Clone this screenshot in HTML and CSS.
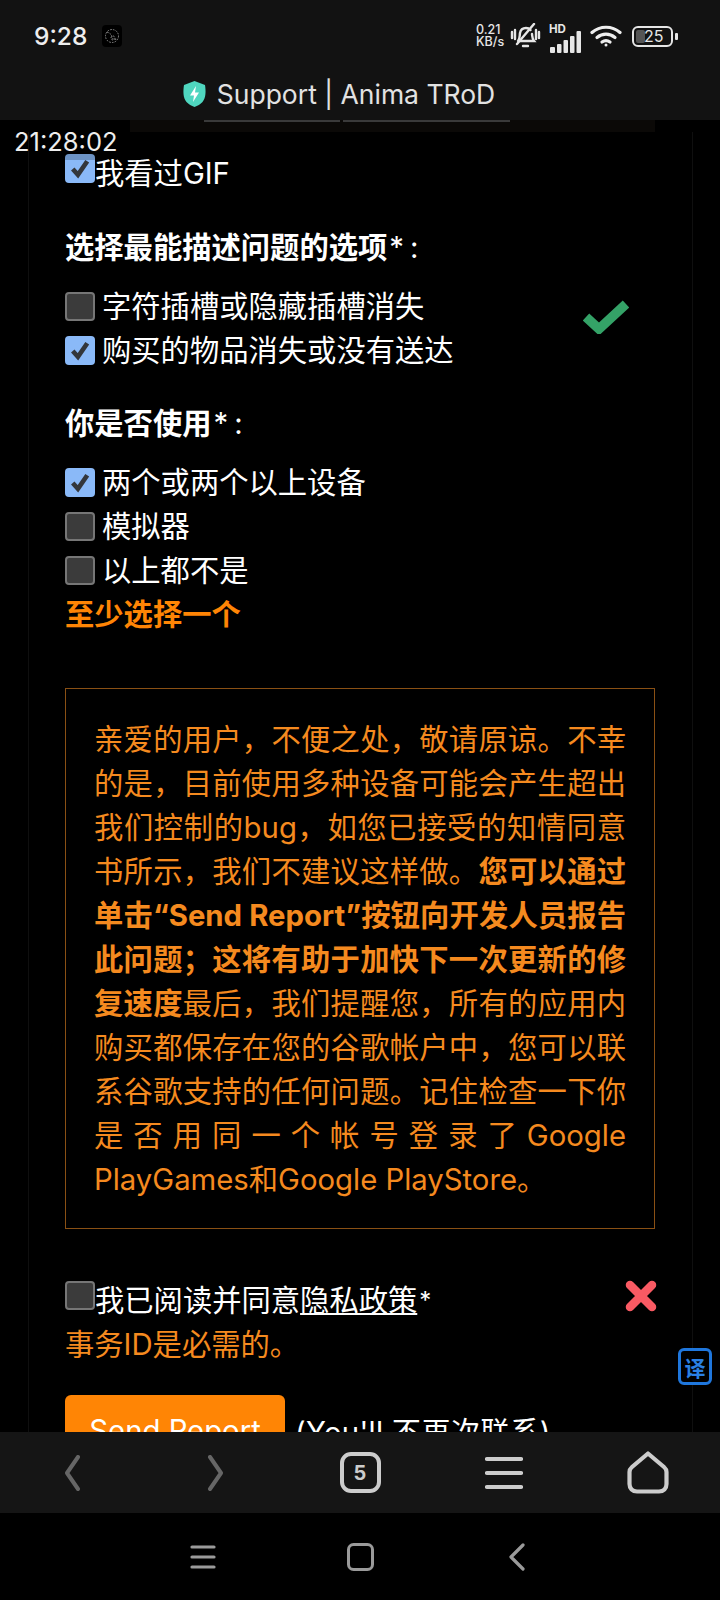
FILE: index.html
```html
<!DOCTYPE html>
<html lang="zh-CN">
<head>
  <meta charset="UTF-8">
  <meta name="viewport" content="width=device-width, initial-scale=1.0">
  <title>Support | Anima TRoD</title>
  <link rel="stylesheet" href="styles.css">
</head>
<body>
  <header class="top-bar">
    <div class="status-bar">
      <span class="status-time">9:28</span>
      <span class="status-app">
        <svg width="18" height="20" viewBox="0 0 18 20" fill="none" stroke="#8a8a8a" stroke-width="1" stroke-dasharray="1.6 1.2">
          <circle cx="9" cy="10" r="6.5"/>
          <path d="M4 6c3 1 5 3 5 5s3 3 5 2"/>
          <circle cx="10" cy="12" r="2"/>
        </svg>
      </span>
      <div class="status-icons">
        <span class="net-speed">0.21<br>KB/s</span>
        <svg class="icon-bell" width="31" height="26" viewBox="0 0 31 26" fill="none" stroke="#e6e6e6" stroke-width="2.4" stroke-linecap="round">
          <path d="M8 18c2-2 1.500-5 2-8 .5-3 3-5 6-5 2 0 3.500.8 4.500 2M22 11c.4 3 .3 5 2 7H10"/>
          <path d="M13 23h5"/>
          <path d="M24 1 7 21"/>
          <path d="M2 9v6M5 7v9M26 7v9M29 9v6"/>
        </svg>
        <span class="signal">
          <span class="signal-hd">HD</span>
          <svg width="32" height="22" viewBox="0 0 32 22" fill="#e6e6e6">
            <rect x="1" y="16" width="5" height="6" rx="1"/>
            <rect x="8" y="13" width="4.500" height="9" rx="1"/>
            <rect x="14.500" y="9" width="4.500" height="13" rx="1"/>
            <rect x="21" y="5" width="4.500" height="17" rx="1"/>
            <rect x="27.500" y="0" width="4.500" height="22" rx="1"/>
          </svg>
        </span>
        <svg class="icon-wifi" width="32" height="22" viewBox="0 0 32 22" fill="none" stroke="#eeeeee" stroke-width="3.200" stroke-linecap="round">
          <path d="M2 7.500c8-7 20-7 28 0"/>
          <path d="M7 12.500c5.500-4.500 12.500-4.500 18 0"/>
          <path d="M12 17c2.500-1.800 5.500-1.800 8 0"/>
          <circle cx="16" cy="20" r="1.500" fill="#eeeeee" stroke="none"/>
        </svg>
        <span class="battery">
          <span class="battery-body"><span class="battery-fill"></span><span class="battery-level">25</span></span>
          <span class="battery-cap"></span>
        </span>
      </div>
    </div>
    <div class="title-bar">
      <svg width="23" height="26" viewBox="0 0 23 26">
        <path d="M11.500 0 22 4c1 6 1 13-2.500 17-2 2.300-5 4-8 5-3-1-6-2.700-8-5C0 17 0 10 1 4Z" fill="#4fd6bf"/>
        <path d="M13 5 7 14.500h4L10 21l6-9.500h-4Z" fill="#ffffff"/>
      </svg>
      <span class="title-text">Support | Anima TRoD</span>
    </div>
  </header>

  <main class="page">
    <div class="page-edge">
      <span class="edge-line edge-short"></span>
      <span class="edge-line edge-long"></span>
    </div>
    <div class="clock">21:28:02</div>
    <button class="translate-btn" type="button">译</button>

    <form class="card">
      <label class="row row-tight">
        <span class="check on shaded"><svg viewBox="0 0 28 28"><path d="M7 14.500 12 20 21 7"/></svg></span>我看过GIF
      </label>

      <h2 class="field-title first">选择最能描述问题的选项<span class="req">*:</span></h2>
      <div class="field">
        <div class="options">
          <label class="row"><span class="check"></span><span class="row-text">字符插槽或隐藏插槽消失</span></label>
          <label class="row"><span class="check on"><svg viewBox="0 0 28 28"><path d="M7 14.500 12 20 21 7"/></svg></span><span class="row-text">购买的物品消失或没有送达</span></label>
        </div>
        <svg class="mark-ok" width="46" height="34" viewBox="0 0 46 34" fill="none" stroke="#34a267" stroke-width="9.500">
          <path d="M3 17 16 29 43 4"/>
        </svg>
      </div>

      <h2 class="field-title">你是否使用<span class="req">*:</span></h2>
      <div class="options">
        <label class="row"><span class="check on"><svg viewBox="0 0 28 28"><path d="M7 14.500 12 20 21 7"/></svg></span><span class="row-text">两个或两个以上设备</span></label>
        <label class="row"><span class="check"></span><span class="row-text">模拟器</span></label>
        <label class="row"><span class="check"></span><span class="row-text">以上都不是</span></label>
      </div>
      <p class="field-error">至少选择一个</p>

      <div class="notice">
        亲爱的用户，不便之处，敬请原谅。不幸的是，目前使用多种设备可能会产生超出我们控制的bug，如您已接受的知情同意书所示，我们不建议这样做。<b>您可以通过单击“Send Report”按钮向开发人员报告此问题；这将有助于加快下一次更新的修复速度</b>最后，我们提醒您，所有的应用内购买都保存在您的谷歌帐户中，您可以联系谷歌支持的任何问题。记住检查一下你是否用同一个帐号登录了Google PlayGames和Google PlayStore。
      </div>

      <div class="consent">
        <label class="row row-tight">
          <span class="check consent-check"></span>我已阅读并同意<a class="policy-link">隐私政策</a><span class="consent-star">*</span>
        </label>
        <svg class="mark-bad" width="32" height="32" viewBox="0 0 32 32" fill="none" stroke="#f95a63" stroke-width="8.500" stroke-linecap="round">
          <path d="M5 5 27 27M27 5 5 27"/>
        </svg>
      </div>
      <p class="consent-error">事务ID是必需的。</p>

      <div class="actions">
        <button class="send-btn" type="button">Send Report</button>
        <span class="actions-note">(You'll 不再次联系)</span>
      </div>
    </form>
  </main>

  <nav class="browser-bar">
    <svg width="20" height="36" viewBox="0 0 20 36" fill="none" stroke="#666666" stroke-width="4" stroke-linecap="round" stroke-linejoin="round">
      <path d="M16 2 5 18l11 16"/>
    </svg>
    <svg width="20" height="36" viewBox="0 0 20 36" fill="none" stroke="#666666" stroke-width="4" stroke-linecap="round" stroke-linejoin="round">
      <path d="M4 2l11 16L4 34"/>
    </svg>
    <span class="tabs-btn">5</span>
    <svg width="38" height="34" viewBox="0 0 38 34" fill="none" stroke="#cccccc" stroke-width="4.200" stroke-linecap="round">
      <path d="M2 3h34M2 17h34M2 31h34"/>
    </svg>
    <svg width="42" height="43" viewBox="0 0 42 43" fill="none" stroke="#cccccc" stroke-width="4.200" stroke-linejoin="round">
      <path d="M21 2.500 37 16c1.500 1.300 2.500 3 2.500 5v12c0 4.500-3 7.500-7.500 7.500H10c-4.500 0-7.500-3-7.500-7.500V21c0-2 1-3.700 2.500-5Z"/>
    </svg>
  </nav>

  <nav class="system-nav">
    <svg width="26" height="24" viewBox="0 0 26 24" fill="none" stroke="#9a9a9a" stroke-width="3.200" stroke-linecap="round">
      <path d="M2 2h22M2 12h22M2 22h22"/>
    </svg>
    <svg width="27" height="28" viewBox="0 0 27 28" fill="none" stroke="#9a9a9a" stroke-width="3">
      <rect x="1.500" y="1.500" width="24" height="25" rx="5"/>
    </svg>
    <svg width="18" height="28" viewBox="0 0 18 28" fill="none" stroke="#9a9a9a" stroke-width="3.200" stroke-linecap="round" stroke-linejoin="round">
      <path d="M15 2 3 14l12 12"/>
    </svg>
  </nav>
</body>
</html>
```

FILE: styles.css
```css
* {
  box-sizing: border-box;
}

body {
  margin: 0;
  width: 720px;
  height: 1600px;
  display: flex;
  flex-direction: column;
  overflow: hidden;
  background-color: #000;
  color: #fff;
  font-family: Inter, "Noto Sans CJK SC", sans-serif;
  font-size: 29.300px;
}

.top-bar {
  height: 120px;
  flex-shrink: 0;
  background-color: #121212;
}

.status-bar {
  height: 72px;
  display: flex;
  align-items: center;
  padding-left: 34px;
}

.status-time {
  font-size: 24.500px;
  font-weight: 500;
  color: #eee;
  width: 68px;
}

.status-app {
  width: 20px;
  height: 22px;
  display: flex;
  align-items: center;
  justify-content: center;
  background-color: #000;
  border-radius: 4px;
}

.status-icons {
  margin-left: auto;
  margin-right: 42px;
  display: flex;
  align-items: center;
  color: #e6e6e6;
}

.net-speed {
  width: 34px;
  font-size: 12.500px;
  line-height: 12px;
  font-weight: 500;
}

.signal {
  position: relative;
  display: block;
  width: 32px;
  height: 22px;
  margin-left: 8px;
}

.signal-hd {
  position: absolute;
  left: 0;
  top: -1px;
  font-size: 11.500px;
  line-height: 10px;
  font-weight: 700;
}

.icon-wifi {
  margin-left: 9px;
}

.battery {
  display: flex;
  align-items: center;
  margin-left: 10px;
}

.battery-body {
  position: relative;
  width: 41px;
  height: 21px;
  border: 2px solid #e6e6e6;
  border-radius: 6px;
  padding: 2px;
  display: flex;
}

.battery-fill {
  width: 9px;
  background-color: #555;
  border-radius: 2px;
}

.battery-level {
  position: absolute;
  left: 10px;
  top: -2px;
  font-size: 16px;
  line-height: 21px;
}

.battery-cap {
  width: 3px;
  height: 7px;
  margin-left: 2px;
  background-color: #e6e6e6;
  border-radius: 1px;
}

.title-bar {
  height: 48px;
  display: flex;
  align-items: center;
  justify-content: center;
  gap: 11px;
  padding: 0 42px 4px 0;
}

.title-text {
  font-size: 26.500px;
  color: #e2e2e2;
}

.page {
  position: relative;
  flex: 1;
  overflow: hidden;
  background-color: #000;
}

.page-edge {
  height: 12px;
  display: flex;
  gap: 3px;
  padding-left: 204px;
  align-items: flex-start;
  background-image: linear-gradient(90deg, #000 130px, #0b0907 130px, #0b0907 655px, #000 655px);
}

.edge-line {
  height: 2px;
  background-color: #3a3a3a;
}

.edge-short {
  width: 136px;
}

.edge-long {
  width: 167px;
}

.clock {
  position: absolute;
  left: 14px;
  top: 7px;
  font-size: 25.500px;
  line-height: 30px;
  color: #eee;
}

.translate-btn {
  position: absolute;
  left: 678px;
  top: 1228px;
  width: 34px;
  height: 37px;
  padding: 0;
  background-color: #000;
  border: 3px solid #1f77dd;
  border-radius: 6px;
  color: #2a80e4;
  font-family: "Noto Sans CJK SC", sans-serif;
  font-size: 21px;
  font-weight: 700;
}

.card {
  margin-left: 28px;
  width: 665px;
  padding: 20px 37px 0 36px;
  border-left: 1px solid #0f0f0f;
  border-right: 1px solid #0f0f0f;
  height: 1300px;
}

.row {
  display: flex;
  align-items: center;
  height: 44px;
}

.row-tight {
  align-items: flex-start;
  line-height: 44px;
}

.row-text {
  margin-left: 7px;
  padding-bottom: 4px;
}

.check {
  width: 30px;
  height: 29px;
  flex-shrink: 0;
  display: block;
  background-color: #3b3b3b;
  border: 2px solid #767676;
  border-radius: 4px;
}

.row-tight .check {
  margin-top: 2px;
}

.check.on {
  background-color: #8ab9f8;
  border: none;
}

.check.shaded {
  background-image: linear-gradient(#6d93c4 6px, #8ab9f8 6px);
}

.check svg {
  display: block;
  width: 100%;
  height: 100%;
  fill: none;
  stroke: #33363b;
  stroke-width: 4.500;
}

.field-title {
  font-size: 29.300px;
  line-height: 44px;
  font-weight: 700;
}

.field-title.first {
  margin: 30px 0 14px;
}

.field-title:not(.first) {
  margin: 30px 0 14px;
}

.req {
  margin-left: 2px;
  font-weight: 400;
  letter-spacing: 6px;
}

.field {
  display: flex;
}

.mark-ok {
  margin-left: auto;
  margin-top: 16px;
  margin-right: 26px;
}

.field-error {
  margin: 1px 0 0;
  line-height: 44px;
  font-weight: 700;
  color: #ff8505;
}

.notice {
  margin-top: 51px;
  padding: 29px 28px 26px;
  border: 1px solid #8a5014;
  line-height: 44px;
  text-align: justify;
  color: #f58a1f;
}

.consent {
  margin-top: 50px;
  display: flex;
}

.consent-check {
  margin-top: 4px;
}

.policy-link {
  text-decoration: underline;
}

.consent-star {
  font-size: 24px;
  margin-left: 2px;
}

.mark-bad {
  margin-left: auto;
  margin-top: 1px;
  margin-right: -2px;
}

.consent-error {
  margin: 0;
  line-height: 44px;
  color: #f58a1f;
}

.actions {
  margin-top: 28px;
  display: flex;
  align-items: center;
  gap: 10px;
}

.actions-note {
  letter-spacing: .3px;
}

.send-btn {
  width: 220px;
  height: 70px;
  padding: 0;
  background-color: #ff8505;
  color: #fff;
  border: none;
  border-radius: 6px;
  font-family: inherit;
  font-size: 29.300px;
}

.browser-bar {
  height: 81px;
  flex-shrink: 0;
  display: grid;
  grid-template-columns: repeat(5, 144px);
  place-items: center;
  background-color: #151515;
}

.tabs-btn {
  width: 41px;
  height: 41px;
  display: flex;
  align-items: center;
  justify-content: center;
  border: 4px solid #ccc;
  border-radius: 11px;
  color: #ccc;
  font-size: 20px;
  font-weight: 700;
}

.system-nav {
  height: 87px;
  flex-shrink: 0;
  display: grid;
  grid-template-columns: repeat(3, 157px);
  justify-content: center;
  place-items: center;
}
```
